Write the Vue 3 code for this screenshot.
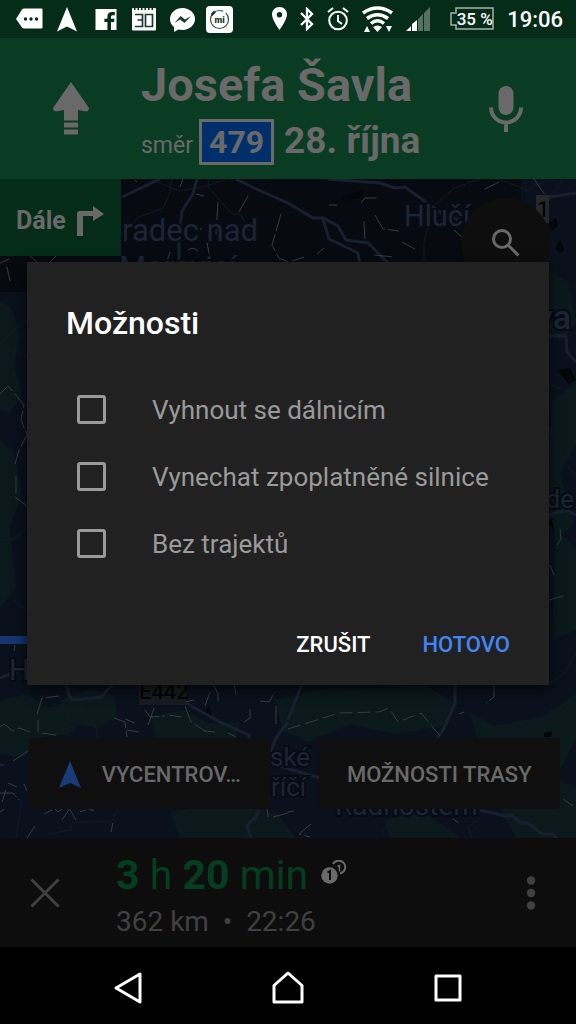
<script setup>
import { ref } from 'vue'

const options = ref([
  { id: 'highways', label: 'Vyhnout se dálnicím', checked: false },
  { id: 'tolls', label: 'Vynechat zpoplatněné silnice', checked: false },
  { id: 'ferries', label: 'Bez trajektů', checked: false },
])

const forests = [
  'M0 300l12 8 8 30-6 26 8 30-12 20-10-4z',
  'M0 440l14 12 8 40-12 36 6 60-16 20z',
  'M0 700l28-6 20 14 26-8 12 18-18 16-30 4-14 20-24-4z',
  'M60 700l30-12 24 8 4 22-22 10-26-6z',
  'M150 716l34-6 26 14 30-2-6 24-50 4-28-12z',
  'M276 700l40-10 110-4 30 18-14 22-48 8-44-10-42 18-26-12z',
  'M470 712l24 14 50-10 32-22v44l-20 40 20 10v50h-60l-16-30 20-40-40-20z',
  'M170 812l50-8 56 8 20 26H180z',
  'M548 270l20 12 8 40-14 20-14-12z',
  'M552 400l24-16v60l-16 30 14 50-20 18-6-60z',
  'M556 530l20 20v80l-24 10z',
  'M384 820l40-8 36 26h-70z',
]

const roads = [
  'M122 197L160 179',
  'M197 179l-4 15-11 17-3 25v30',
  'M236 179l20 10 32 14 25 15h10l15 8 8 14 22 3 20 20',
  'M323 219l6 20 29 14 2 12',
  'M328 179l52 4 15 5 10-1 36 26 30 12',
  'M576 193l-26 4-12 14',
  'M548 336h18l1 16 9 10',
  'M548 515l18-5 10 5',
  'M0 678l30-12',
  'M66 684l4 14 5 2 26-3 11-12',
  'M186 703l34 19 29 13v12',
  'M288 720l14-36',
  'M455 684v20l-12 26-10 14',
  'M288 722l-12 16-14 34',
  'M272 764l48 14M480 810l25 6 6-1 10 8h7l14 11h10l8 8',
  'M258 808v6l-11 12 4 12',
]

const minorRoads = [
  'M172 179l-3 16-6 13-24 9-22 20M157 182l22 9 24-4 24-8M208 179l1 9 22 25 10 2 9 16',
  'M424 262v-20l10-36 20-18 26-9',
  'M0 344l14-14 14-9M0 346l28 10',
  'M0 540h12l14-11M0 590l26 20',
  'M548 385l22 6 6 5M548 424l8 24 20 30M548 684l16-10 12-22',
  'M73 703l-12 32M80 704l16 24 2 12',
  'M22 800l-6 38M48 834l22-4 2-7 40-2 10-20',
  'M394 819l-12 14M480 818l-12 10 4 10',
  'M500 180l28 10 20-11M562 179l-6 12-20 12',
]

const paths = [
  'M485 189l14-7M361 203l4-5h11l2-3M375 215l8 14 16 2M364 221l1 19M402 242l13 7M329 205h8M534 179l11 16M317 254l7-6M374 255l20 2M292 261l12-4M454 230l10 9',
  'M248 196l-9 16M218 202l-2 32M281 214l-9 31 7 13 9 4M196 194l8 2M183 179l-3 8M188 250q5-4 10 1M170 252l-4 12M207 242l4 22M135 180l2 2M199 229h3',
  'M0 263l9-4M30 256l7 6M50 262l6-6M7 267l3 14',
  'M0 394l8-8 16 19-3 15 6 15-8 15-4 14M16 476v22l11 8M15 645l-1 6',
  'M37 714l5-16 17-2M38 720v12M0 727l4-3 9 7 6-3 11 4M42 733l14 2M13 761l15-10M0 765h4',
  'M114 718l11 4 2 15M125 719l10 4M127 730l12 2M145 710l5 7 15-1M154 708l-7 20M169 715l12 2M185 706l6 16 14 9M204 731l11 1M194 700l-9 2M213 684l5 10v8M205 706l5-14M234 684l2 10M260 701l9 1 4-7M276 706v18M244 722l6-4v-9M228 733l8 4',
  'M8 783l9 4M0 793h13l6 7M2 802l4-12M24 784l3 7M0 812l4-3M35 826l-8 12M44 814l8-4M50 804l8 8 8-6M62 820l8-12M68 806l8 14M80 812l6-2M88 808l5 3 0-8M113 823l-2 9',
  'M267 809l1 8M273 817l15-4M288 812l6-1M311 824l-12 10 11 3M453 819l6 4M563 799l10 7',
  'M560 529l1 10-4 6M550 565l4 10M549 600l14-4M494 685v12l-8 6M459 714l5-2',
]
</script>

<template>
  <div class="phone">
    <div class="screen">
      <header class="status">
        <div class="notifications">
          <svg viewBox="0 0 28 28" aria-hidden="true"><path fill="#fff" d="M1 14L7 4.500Q8 3.500 9 3.500H26.500Q27.500 3.500 27.500 4.500V22.500Q27.500 23.500 26.500 23.500H9Q8 23.500 7 22.500z"/><g fill="#052b19"><circle cx="10.500" cy="14" r="1.700"/><circle cx="16" cy="14" r="1.700"/><circle cx="21.500" cy="14" r="1.700"/></g></svg>
          <svg viewBox="0 0 28 28" aria-hidden="true"><path fill="#fff" d="M14 2L24 26.500 14 21.500 4 26.500z"/></svg>
          <svg viewBox="0 0 28 28" aria-hidden="true"><path fill="#fff" d="M4.500 4h21v21h-5.500v-8h3l.5-3.300H20V12c0-1.200.5-1.800 2-1.800h1.800V7h-2.600c-3.200 0-4.800 1.700-4.800 4.600v2.100h-3V17h3v8H4.500z"/></svg>
          <svg viewBox="0 0 28 28" aria-hidden="true"><rect x="3" y="3" width="24" height="22.500" rx="1" fill="#fff"/><path stroke="#052b19" stroke-width="2" stroke-dasharray="1.500 2" d="M5 4h20"/><path d="M6 9.500h7.500v12H6M8.500 15h5M16.500 9.500h7v12h-7z" fill="none" stroke="#183c2b" stroke-width="1.700"/></svg>
          <svg viewBox="0 0 28 28" aria-hidden="true"><path fill="#fff" d="M15.500 3C8.500 3 3 7.900 3 14c0 3.600 1.600 6.300 4.100 8.200V27l4.200-2.600c1.300.3 2.700.5 4.200.5C22.500 24.900 28 20 28 14S22.500 3 15.500 3z"/><path fill="#183c2b" d="M7.500 18l6-7 4.500 3.500 6-3.500-6.500 7-4.500-3.500z"/></svg>
          <svg viewBox="0 0 28 28" aria-hidden="true"><rect x="1" y="1" width="27" height="27" rx="4" fill="#fff"/><circle cx="14.500" cy="14.500" r="9" fill="none" stroke="#345445" stroke-dasharray="46 3" stroke-width="1.200"/><path stroke="#183c2b" stroke-width="2.500" d="M6.500 10l3.500-3.500"/><text x="14.500" y="17.500" text-anchor="middle" class="mi">mi</text></svg>
        </div>
        <div class="indicators">
          <svg class="pin" viewBox="0 0 15 24" aria-hidden="true"><path fill="#fff" fill-rule="evenodd" d="M7.500 0C3 0 0 3.300 0 7.500 0 13 7.500 23 7.500 23S15 13 15 7.500C15 3.300 12 0 7.500 0zm0 5a2.700 2.700 0 110 5.400 2.700 2.700 0 010-5.400z"/></svg>
          <svg class="bt" viewBox="0 0 14 24" aria-hidden="true"><path fill="none" stroke="#fff" stroke-width="2.300" d="M1 6l11 11-5 5V2l5 5L1 18"/></svg>
          <svg class="alarm" viewBox="0 0 22 24" aria-hidden="true"><g fill="none" stroke="#fff" stroke-width="2"><circle cx="11" cy="13.500" r="8.800"/><path d="M11 8v6l4 3M1 5l5-4M21 5l-5-4"/></g></svg>
          <svg class="wifi" viewBox="0 0 31 27" aria-hidden="true"><g fill="none" stroke="#fff" stroke-width="3.500"><path d="M1 7Q15.500-3 30 7M5 12.500Q15.500 5 26 12.500M9 17.500Q15.500 12 22 17.500"/></g><path fill="#fff" d="M11 21q4.500-3 9 0l-4.500 5zM2 26l3-6 3 6zM24 20h6l-3 6z"/></svg>
          <svg class="signal" viewBox="0 0 31 24" aria-hidden="true"><path fill="#fff" d="M0 24l5-5v5zM6 24v-7l5-4v11z"/><path fill="#567061" d="M12 24V12l5-5v17zM18 24V6l6-6v24z"/></svg>
          <span class="battery"><svg viewBox="0 0 44 24" aria-hidden="true"><path fill="none" stroke="#a4b3ab" stroke-width="1.500" d="M6 1h37v21H6v-4H1V6h5z"/></svg><span>35 %</span></span>
          <time>19:06</time>
        </div>
      </header>

      <section class="direction">
        <svg class="straight" viewBox="0 0 36 54" aria-hidden="true"><path d="M18 0l18 26q0 3-3 3.500l-8-1.500v10.500H11V28l-8 1.500Q0 29 0 26zM11 40.500h14v5H11zM11 47.500h14v5H11z"/></svg>
        <div class="street">
          <h1>Josefa Šavla</h1>
          <p><span class="toward">směr</span><b class="shield">479</b><strong>28. října</strong></p>
        </div>
        <button class="bare" aria-label="Hlasové ovládání"><svg class="mic" viewBox="0 0 34 46" aria-hidden="true"><rect x="9.500" y="0" width="15" height="29" rx="7.500"/><path d="M2 21.500a15 15 0 0030 0M17 36v10" fill="none" stroke="#696969" stroke-width="4"/></svg></button>
      </section>

      <main class="map">
        <svg class="canvas" viewBox="0 179 576 659" preserveAspectRatio="xMidYMid slice" aria-hidden="true">
          <rect y="179" width="576" height="659" fill="#0a111c"/>
          <path v-for="d in forests" :key="d" :d="d" fill="#0b181c"/>
          <path fill="#070a10" d="M0 179h521v113H0z"/>
          <path fill="#040609" d="M342 197l22-7-4 8-16 3zM548 224l8-6 2 8-6 5zM555 249l5-10 4 11-4 3zM558 370l12-2 6 12-8 4zM204 712l5-6 3 10zM544 733l8-2-1 6h-7zM548 520l4 1 3 14z"/>
          <path v-for="d in minorRoads" :key="d" :d="d" class="minor"/>
          <path v-for="d in roads" :key="d" :d="d" class="road"/>
          <path v-for="d in paths" :key="d" :d="d" class="lane"/>
          <path class="lane dashed" d="M288 729l51-16 40-1 10-4 9 14 23-9 20 24"/>
          <path stroke="#14356e" stroke-width="8" d="M0 640h40"/>
          <rect x="536" y="195" width="13" height="28" fill="#25272a"/>
          <text x="537" y="217" class="number">1</text>
          <rect x="139" y="680" width="47" height="25" fill="#181b1f"/>
          <text x="139" y="699" class="number">E442</text>
          <g class="label">
            <text x="122" y="241" class="large">radec nad</text>
            <text x="119" y="278" class="large">Moravicí</text>
            <text x="404" y="226">Hlučí</text>
            <text x="574" y="508" text-anchor="end" class="small">de</text>
            <text x="9" y="680">H</text>
            <text x="270" y="766" class="small">ské</text>
            <text x="271" y="796" class="small">říčí</text>
            <text x="335" y="815" class="medium">Radhoštěm</text>
            <text x="571" y="329" text-anchor="end" class="city">va</text>
          </g>
        </svg>
        <div class="next"><span>Dále</span><svg viewBox="0 0 28 30" aria-hidden="true"><path d="M0 30V8q0-3 3-3h13V0l11 8-11 7v-5H6v20z"/></svg></div>
        <button class="search" aria-label="Hledat"><svg viewBox="0 0 28 28" aria-hidden="true"><circle cx="10" cy="10" r="8.500"/><path d="M16 16l10.500 10.500"/></svg></button>
        <div class="map-actions">
          <button><svg viewBox="0 0 22 27" aria-hidden="true"><path d="M11 0l11 27-11-5-11 5z"/></svg><span>VYCENTROV…</span></button>
          <button>MOŽNOSTI TRASY</button>
        </div>
      </main>

      <footer class="trip">
        <button class="bare" aria-label="Zavřít"><svg class="close" viewBox="0 0 30 30" aria-hidden="true"><path d="M1.500 1.500l27 27M28.500 1.500l-27 27"/></svg></button>
        <div class="summary">
          <div class="duration"><span><b>3</b> h <b>20</b> min</span>
            <svg viewBox="0 0 26 26" aria-hidden="true"><circle cx="8.500" cy="15.500" r="8.200" fill="#696969"/><path fill="none" stroke="#0d0d0d" stroke-width="2" d="M6.500 12.500l2.500-1.500v9"/><path fill="none" stroke="#696969" stroke-width="2" d="M12 4a6.500 6.500 0 117 9.500"/><path fill="none" stroke="#696969" stroke-width="1.500" d="M16.500 6.500l2-1v6"/></svg>
          </div>
          <div class="arrival">362 km&nbsp; •&nbsp; 22:26</div>
        </div>
        <button class="bare" aria-label="Další možnosti"><svg class="more" viewBox="0 0 10 34" aria-hidden="true"><circle cx="5" cy="4.500" r="4.200"/><circle cx="5" cy="17" r="4.200"/><circle cx="5" cy="29.500" r="4.200"/></svg></button>
      </footer>

      <div class="overlay">
        <form class="dialog" role="dialog" aria-labelledby="dialog-title" @submit.prevent>
          <h2 id="dialog-title">Možnosti</h2>
          <label v-for="option in options" :key="option.id" :for="option.id">
            <input :id="option.id" v-model="option.checked" type="checkbox">
            <span>{{ option.label }}</span>
          </label>
          <div class="dialog-actions">
            <button type="button">ZRUŠIT</button>
            <button type="submit" class="primary">HOTOVO</button>
          </div>
        </form>
      </div>
    </div>

    <nav class="system">
      <button class="bare" aria-label="Zpět"><svg viewBox="0 0 32 34" aria-hidden="true"><path d="M28 3v28L4 17z"/></svg></button>
      <button class="bare" aria-label="Domů"><svg viewBox="0 0 32 34" aria-hidden="true"><path d="M2 31V14.500L16 2l14 12.500V31z"/></svg></button>
      <button class="bare" aria-label="Přehled"><svg viewBox="0 0 32 34" aria-hidden="true"><path d="M4 5h24v24H4z"/></svg></button>
    </nav>
  </div>
</template>

<style>
body {
  margin: 0;
  background: #000;
}
</style>

<style scoped>
.phone {
  display: flex;
  flex-direction: column;
  min-height: 100vh;
  font-family: Roboto, "Noto Sans", sans-serif;
  color: #696969;
}
.phone *, .phone *::before { box-sizing: border-box; }
svg { display: block; flex: none; }
h1, h2, p { margin: 0; }
button {
  padding: 0;
  border: 0;
  background: none;
  color: inherit;
  font: inherit;
  cursor: pointer;
}
.bare {
  display: flex;
  align-items: center;
  justify-content: center;
}
.screen {
  position: relative;
  display: flex;
  flex: 1;
  flex-direction: column;
}
.status {
  display: flex;
  align-items: center;
  justify-content: space-between;
  height: 38px;
  padding: 0 13px 0 15px;
  background: #052b19;
  color: #fff;
}
.notifications { display: flex; gap: 10px; }
.notifications svg { width: 28px; height: 28px; }
.mi { font-size: 9px; font-weight: 900; fill: #183c2b; }
.indicators {
  display: flex;
  align-items: center;
  gap: 13px;
}
.pin { width: 15px; height: 24px; }
.bt { width: 14px; height: 24px; }
.alarm { width: 22px; height: 24px; }
.wifi { width: 31px; height: 27px; }
.signal { width: 31px; height: 24px; }
.battery {
  display: grid;
  width: 44px;
  place-items: center;
  font-size: 17px;
  font-weight: 500;
  line-height: 24px;
  white-space: nowrap;
}
.battery > * { grid-area: 1 / 1; }
.battery svg { width: 44px; height: 24px; }
.battery span { padding-left: 5px; }
time {
  padding-top: 2px;
  font-size: 22px;
  font-weight: 500;
  line-height: 28px;
}
.direction {
  display: grid;
  grid-template-columns: 141px 1fr 141px;
  align-items: center;
  min-height: 141px;
  background: #093c22;
  fill: #696969;
}
.straight {
  width: 36px;
  height: 54px;
  justify-self: center;
}
.mic { width: 34px; height: 46px; }
.street { padding-top: 5px; white-space: nowrap; }
.street h1 {
  font-size: 47px;
  font-weight: 700;
  line-height: 56px;
}
.street p {
  display: flex;
  align-items: baseline;
  padding-top: 6px;
  font-size: 37px;
  line-height: 40px;
}
.toward { font-size: 23px; }
.shield {
  margin: 0 10px 0 6px;
  padding: 0 7px;
  border: 3px solid #696969;
  background: #002f6c;
  font-size: 32px;
}
.street strong { font-weight: 700; }
.map {
  position: relative;
  display: flex;
  flex: 1;
  flex-direction: column;
  align-items: flex-start;
  justify-content: space-between;
  min-height: 480px;
  overflow: hidden;
}
.canvas {
  position: absolute;
  inset: 0;
  width: 100%;
  height: 100%;
}
.road { fill: none; stroke: #18202f; stroke-width: 3; }
.minor { fill: none; stroke: #141a22; stroke-width: 1; }
.lane { fill: none; stroke: #3a3b3d; stroke-width: 1; stroke-dasharray: 18 3; }
.dashed { stroke-dasharray: 13 5; }
.number { font-size: 22px; fill: #000; }
.label {
  font-size: 29px;
  fill: #1c2536;
  stroke: #070b13;
  stroke-width: 4;
  paint-order: stroke;
}
.large { font-size: 31px; }
.medium { font-size: 28px; }
.small { font-size: 26px; }
.city { font-size: 34px; font-weight: 500; }
.next {
  position: relative;
  display: flex;
  align-items: center;
  gap: 11px;
  height: 77px;
  padding: 6px 16px 0;
  background: #052b19;
  font-size: 25px;
  font-weight: 700;
}
.next svg { width: 28px; height: 30px; fill: #696969; }
.search {
  position: absolute;
  top: 19px;
  right: 25px;
  display: grid;
  width: 90px;
  height: 90px;
  place-items: center;
  border-radius: 50%;
  background: #0e0e0e;
}
.search svg {
  width: 28px;
  height: 28px;
  fill: none;
  stroke: #696969;
  stroke-width: 3;
}
.map-actions {
  position: relative;
  display: flex;
  align-self: stretch;
  gap: 48px;
  padding: 0 16px 29px 29px;
}
.map-actions button {
  display: flex;
  flex: 1;
  align-items: center;
  justify-content: center;
  gap: 21px;
  height: 71px;
  padding-top: 2px;
  border-radius: 3px;
  background: #0f0f0f;
  font-size: 22px;
  font-weight: 500;
  white-space: nowrap;
}
.map-actions svg { width: 22px; height: 27px; fill: #1b3a78; }
.trip {
  display: grid;
  grid-template-columns: 90px 1fr 90px;
  min-height: 109px;
  background: #0d0d0d;
  color: #404040;
}
.close {
  width: 30px;
  height: 30px;
  stroke: #404040;
  stroke-width: 3;
}
.more { width: 10px; height: 34px; fill: #404040; }
.summary { padding: 12px 0 0 26px; white-space: nowrap; }
.duration {
  display: flex;
  gap: 13px;
  color: #053d22;
  font-size: 41px;
  line-height: 50px;
}
.duration svg { width: 26px; height: 26px; margin-top: 10px; }
.arrival {
  padding-top: 4px;
  font-size: 28px;
  line-height: 36px;
}
.overlay {
  position: absolute;
  inset: 0;
  display: flex;
  align-items: center;
  padding: 0 27px;
}
.dialog {
  flex: 1;
  padding: 42px 39px 15px;
  background: #212121;
  box-shadow: 0 4px 12px rgba(0, 0, 0, .7);
}
.dialog h2 {
  margin-bottom: 34px;
  color: #fff;
  font-size: 32px;
  font-weight: 500;
  line-height: 38px;
}
.dialog label {
  display: flex;
  align-items: center;
  gap: 46px;
  min-height: 67px;
  padding-left: 11px;
  color: #9a9a9a;
  font-size: 26px;
}
.dialog input {
  flex: none;
  width: 29px;
  height: 29px;
  margin: 0;
  border: 3px solid #9a9a9a;
  border-radius: 3px;
  appearance: none;
}
.dialog input:checked { background: #4285f4; }
.dialog-actions {
  display: flex;
  justify-content: flex-end;
  gap: 52px;
  padding-top: 41px;
}
.dialog-actions button {
  height: 52px;
  color: #fff;
  font-size: 22px;
  font-weight: 500;
}
.dialog-actions .primary { color: #4285f4; }
.system {
  display: grid;
  grid-template-columns: repeat(3, 160px);
  justify-content: center;
  height: 77px;
  padding-top: 5px;
  background: #000;
}
.system svg {
  width: 32px;
  height: 34px;
  fill: none;
  stroke: #fff;
  stroke-width: 3;
  stroke-linejoin: round;
}
</style>
